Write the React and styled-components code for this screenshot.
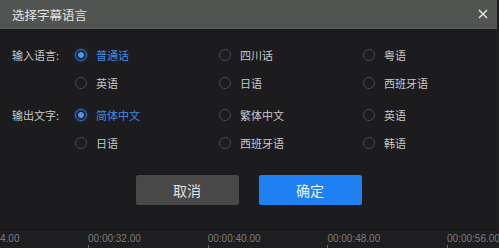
import styled, { createGlobalStyle } from "styled-components";
import { useState } from "react";

const GlobalStyle = createGlobalStyle`
  html, body {
    margin: 0;
    padding: 0;
    background: #1e1e20;
    font-family: "Noto Sans CJK SC", "Noto Sans", sans-serif;
  }
`;

const inputLangs = ["普通话", "四川话", "粤语", "英语", "日语", "西班牙语"];
const outputLangs = ["简体中文", "繁体中文", "英语", "日语", "西班牙语", "韩语"];
const ticks = ["00:00:32.00", "00:00:40.00", "00:00:48.00", "00:00:56.00"];

function RadioGroup({ label, options, value, onChange }) {
  return (
    <Group>
      <Label>{label}</Label>
      {options.map((opt, i) => (
        <Option key={opt} $newRow={i > 0 && i % 3 === 0} onClick={() => onChange(opt)}>
          <Radio $checked={value === opt} />
          <OptionText $checked={value === opt}>{opt}</OptionText>
        </Option>
      ))}
    </Group>
  );
}

export default function App() {
  const [input, setInput] = useState("普通话");
  const [output, setOutput] = useState("简体中文");

  return (
    <>
      <GlobalStyle />
      <Dialog>
        <TitleBar>
          <Title>选择字幕语言</Title>
          <Close>
            <svg width="10" height="10" viewBox="0 0 10 10">
              <path d="M1 1L9 9M9 1L1 9" stroke="#e6e6e6" strokeWidth="1.4" />
            </svg>
          </Close>
        </TitleBar>
        <Body>
          <RadioGroup label="输入语言:" options={inputLangs} value={input} onChange={setInput} />
          <RadioGroup label="输出文字:" options={outputLangs} value={output} onChange={setOutput} />
          <Buttons>
            <Button>取消</Button>
            <Button $primary>确定</Button>
          </Buttons>
        </Body>
      </Dialog>
      <Timeline>
        <Lead>4.00</Lead>
        {ticks.map((t) => (
          <Tick key={t}>{t}</Tick>
        ))}
      </Timeline>
    </>
  );
}

const Dialog = styled.div`
  width: 497px;
  background: #1c1c1e;
  border-bottom: 1px solid #121213;
`;

const TitleBar = styled.div`
  height: 28px;
  display: flex;
  align-items: center;
  justify-content: space-between;
  padding: 0 8px 0 12px;
  background: #525452;
  border-bottom: 1px solid #5c5e5c;
`;

const Title = styled.div`
  font-size: 12.5px;
  color: #e2e2e2;
`;

const Close = styled.div`
  display: flex;
  align-items: center;
  width: 12px;
  height: 12px;
  justify-content: center;
`;

const Body = styled.div`
  padding: 12px 0 24px 12px;
  display: flex;
  flex-direction: column;
`;

const Group = styled.div`
  display: grid;
  grid-template-columns: 63px repeat(3, 144px);
  grid-auto-rows: 28px;
  & + & {
    margin-top: 4px;
  }
`;

const Label = styled.div`
  display: flex;
  align-items: center;
  font-size: 11px;
  color: #c8c8c8;
`;

const Option = styled.div`
  display: flex;
  align-items: center;
  gap: 9px;
  cursor: pointer;
  grid-column-start: ${(p) => (p.$newRow ? 2 : "auto")};
`;

const Radio = styled.span`
  box-sizing: border-box;
  width: 12px;
  height: 12px;
  border-radius: 50%;
  border: 1px solid ${(p) => (p.$checked ? "#2f78d6" : "#4a4a4c")};
  background: ${(p) =>
    p.$checked ? "radial-gradient(circle, #4f93ec 0 2.6px, #1c2638 3.2px)" : "transparent"};
  box-shadow: ${(p) => (p.$checked ? "0 0 3px rgba(47,120,214,0.6)" : "none")};
`;

const OptionText = styled.span`
  font-size: 11px;
  color: ${(p) => (p.$checked ? "#3f8ae6" : "#c8c8c8")};
`;

const Buttons = styled.div`
  display: flex;
  justify-content: center;
  gap: 20px;
  margin: 18px 12px 0 0;
`;

const Button = styled.button`
  width: 103px;
  height: 30px;
  border: none;
  border-radius: 2px;
  font-family: inherit;
  font-size: 14px;
  color: ${(p) => (p.$primary ? "#eef5ff" : "#e0e0e0")};
  background: ${(p) => (p.$primary ? "#1f80f2" : "#484848")};
  cursor: pointer;
`;

const Timeline = styled.div`
  height: 18px;
  overflow: hidden;
  display: flex;
  padding-top: 3px;
  box-sizing: border-box;
  background: #1e1e20;
  font-family: "Liberation Sans", sans-serif;
  font-size: 10px;
  color: #7c7c7e;
`;

const Lead = styled.div`
  flex: 0 0 88px;
`;

const Tick = styled.div`
  flex: 0 0 119.7px;
  position: relative;
  &::after {
    content: "";
    position: absolute;
    left: 0;
    top: 12px;
    width: 1px;
    height: 4px;
    background: #6a6a6c;
  }
`;
